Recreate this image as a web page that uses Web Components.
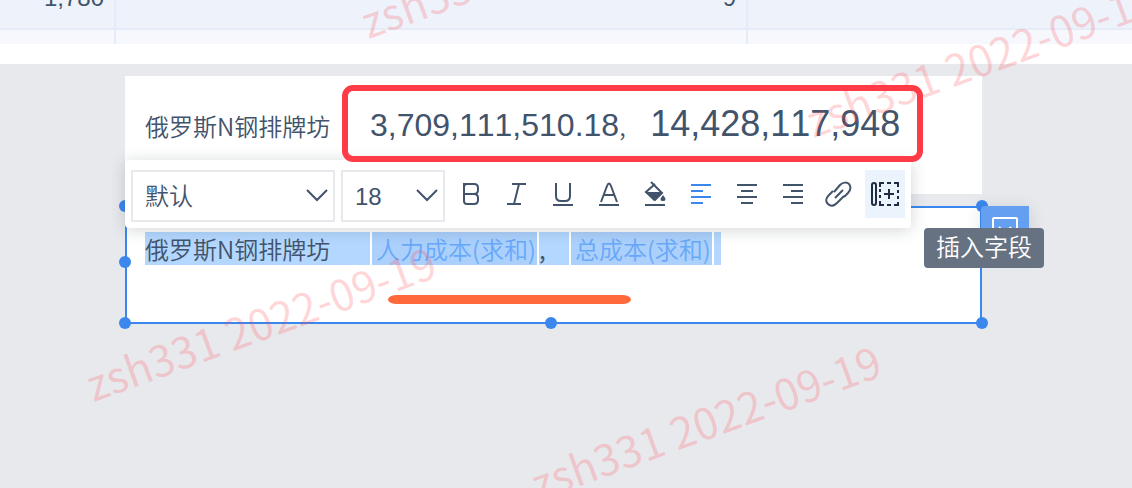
<!DOCTYPE html>
<html lang="zh-CN">
<head>
<meta charset="utf-8">
<title>报表编辑</title>
<style>
html,body{margin:0;min-height:100%;background:#e8e9ed}
body{font-family:"Liberation Sans","Noto Sans CJK SC",sans-serif;color:#42536c;overflow:hidden;height:100vh}
</style>
</head>
<body>
<report-editor></report-editor>
<script>
const define = (name, html, setup) => {
  const tpl = document.createElement('template');
  tpl.innerHTML = html;
  customElements.define(name, class extends HTMLElement {
    connectedCallback() {
      if (this.shadowRoot) return;
      this.attachShadow({mode: 'open'}).append(tpl.content.cloneNode(true));
      if (setup) setup(this, this.shadowRoot);
    }
  });
};

define('data-grid', `
<style>
:host{display:block;height:44px;overflow:hidden;background:#f6f8fd;border-bottom:20px solid #fff}
table{width:100%;margin-top:-32px;border-collapse:separate;border-spacing:0;table-layout:fixed;font-size:24px;line-height:28px;font-kerning:none}
td{height:60px;padding:0 10px 0 0;box-sizing:border-box;text-align:right;vertical-align:middle;border-right:2px solid #e5ecf8;border-bottom:2px solid #e5ecf8}
td:last-child{border-right:0}
tr:first-child td{background:#edf2fb;height:62px}
.a{width:116px}.b{width:632px}
</style>
<table><colgroup><col class="a"><col class="b"><col></colgroup>
<tbody><tr><td>1,780</td><td>9</td><td></td></tr><tr><td></td><td></td><td></td></tr></tbody></table>`);

define('text-card', `
<style>
:host{display:block;position:relative;box-sizing:border-box;height:118px;padding:24px 20px 0;background:#fff;font-size:24px;line-height:48px;white-space:nowrap}
:host([selected]){border:2px solid #3b87ee;padding:24px 18px 0;line-height:33px}
i{display:none;position:absolute;width:12px;height:12px;border-radius:50%;background:#3b87ee}
:host([selected]) i{display:block}
.l{left:-8px}.r{right:-8px}.t{top:-8px}.b{bottom:-7px}
.m{top:calc(50% - 9px)}.c{left:calc(50% - 9px)}
</style>
<slot></slot><i class="l t"></i><i class="l m"></i><i class="l b"></i><i class="c b"></i><i class="r t"></i><i class="r b"></i>`);

define('summary-line', `
<style>
:host{display:flex;align-items:baseline;font-kerning:none}
.t{font-family:"Noto Sans CJK SC",sans-serif;font-weight:350;width:185px}
.n{font-size:32px;margin-left:40px}
.s{font-family:"Noto Sans CJK SC",sans-serif;font-weight:350;width:7px}
.w{font-size:36px;margin-left:24px}
</style>
<span class="t">俄罗斯N钢排牌坊</span><span class="n">3,709,111,510.18</span><span class="s">,</span><span class="w">14,428,117,948</span>`);

define('field-token', `
<style>
:host{display:block;box-sizing:border-box;padding:0 1px 0 4px;background:#abd0fb;color:#68a8f8;border:solid #fff;border-width:0 2px}
</style><slot></slot>`);

define('formula-line', `
<style>
:host{display:flex;width:max-content;background:#b3d7fe;font-family:"Noto Sans CJK SC",sans-serif;font-weight:350}
.t{width:225px}.s{width:30px;font-weight:400}.e{width:7px}
</style>
<span class="t">俄罗斯N钢排牌坊</span><field-token>人力成本(求和)</field-token><span class="s">,</span><field-token>总成本(求和)</field-token><span class="e"></span>`);

define('pick-list', `
<style>
:host{display:block;position:relative}
select{appearance:none;display:block;width:100%;height:52px;margin:0;padding:0 12px;border:2px solid #e8e9ed;border-radius:0;background:#fff;color:inherit;font:inherit;font-weight:350;font-size:24px}
svg{position:absolute;right:6px;top:18px;pointer-events:none}
</style>
<select></select>
<svg width="24" height="16" viewBox="0 0 24 16" fill="none" stroke="#42536c" stroke-width="2"><path d="M2 2l10 10L22 2"/></svg>`,
(host, root) => {
  const s = root.querySelector('select');
  s.setAttribute('aria-label', host.getAttribute('label'));
  s.add(new Option(host.getAttribute('value')));
});

const icons = {
  bold: '<path d="M8 4h10q4 0 4 4v2q0 4-4 4H8zM8 14h10q4 0 4 4v2q0 4-4 4H11q-3 0-3-3V7q0-3 3-3"/>',
  italic: '<path d="M10 4h14M5 24h14M17 4l-5 20"/>',
  underline: '<path d="M8 3v13q0 5 5 5h4q5 0 5-5V3M5 25h20"/>',
  color: '<path d="M7 22l6-16q2-5 4 0l6 16M9 15h12M5 25h20"/>',
  fill: '<path d="M11 2l11 11-7 7-9-8 9-8"/><path fill="#42536c" stroke="none" d="M5 12h18l-9 9zM23 15q-5 6 0 6t0-6z"/><path d="M5 25h20"/>',
  left: '<path d="M5 5h20M5 11h12M5 17h20M5 23h12"/>',
  center: '<path d="M5 5h20M9 11h12M5 17h20M9 23h12"/>',
  right: '<path d="M5 5h20M13 11h12M5 17h20M13 23h12"/>',
  link: '<path d="M10 12l6-7c3-3 7-3 9-1s2 6-1 9l-4 4M11 18l8-8M20 16l-7 7c-3 3-6 4-9 1s-2-6 1-9l4-4"/>',
  field: '<rect x="2" y="3" width="4" height="22" rx="2"/><path d="M10 7V3h4m3 0h4m3 0h4v4m0 3v3m0 3v3m0 3v3h-4m-3 0h-4m-3 0h-4v-4m0-3v-3m0-3v-3M14 14h10M19 9v10"/>'
};
define('tool-button', `
<style>
:host{display:block}
button{display:flex;align-items:center;justify-content:center;width:40px;height:48px;margin:0;padding:0;border:0;background:none;color:#42536c}
:host([on]) button{color:#3b87ee}
:host([hover]) button{background:#ebf3fd;color:#1f2c43}
svg{fill:none;stroke:currentColor;stroke-width:2}
</style>
<button type="button"><svg width="30" height="28" viewBox="0 0 30 28"></svg></button>`,
(host, root) => {
  root.querySelector('svg').innerHTML = icons[host.getAttribute('icon')];
  root.querySelector('button').setAttribute('aria-label', host.getAttribute('label'));
});

define('format-bar', `
<style>
:host{display:flex;align-items:center;box-sizing:border-box;height:68px;padding:4px 6px 0;background:#fff;border-radius:4px;box-shadow:0 2px 16px rgba(31,45,61,.2)}
.font{width:204px;margin-right:6px}.size{width:104px}
.tools{display:flex;gap:6px;margin:-4px 0 0 6px}
</style>
<pick-list class="font" label="字体" value="默认"></pick-list><pick-list class="size" label="字号" value="18"></pick-list>
<div class="tools">
<tool-button icon="bold" label="加粗"></tool-button><tool-button icon="italic" label="斜体"></tool-button>
<tool-button icon="underline" label="下划线"></tool-button><tool-button icon="color" label="文字颜色"></tool-button>
<tool-button icon="fill" label="背景颜色"></tool-button><tool-button icon="left" label="左对齐" on></tool-button>
<tool-button icon="center" label="居中"></tool-button><tool-button icon="right" label="右对齐"></tool-button>
<tool-button icon="link" label="链接"></tool-button><tool-button icon="field" label="插入字段" hover></tool-button>
</div>`);

define('card-menu', `
<style>
:host{display:block}
button{display:block;width:48px;height:48px;margin:0;padding:10px;border:0;border-radius:4px 0 0 0;background:#649ff2;box-shadow:0 2px 16px rgba(31,45,61,.15)}
</style>
<button type="button" aria-label="卡片菜单"><svg width="28" height="28" viewBox="0 0 28 28" fill="none" stroke="#fff" stroke-width="2"><rect x="2" y="2" width="24" height="24" rx="1"/><path d="M8 11l6 6 6-6"/></svg></button>`);

define('tool-tip', `
<style>
:host{display:block;padding:0 12px;border-radius:4px;background:#667182;color:#fff;font-size:24px;line-height:40px;white-space:nowrap;font-weight:350}
</style><slot></slot>`);

define('water-mark', `
<style>
:host{position:absolute;display:block;font:43px/48px "Noto Sans CJK SC",sans-serif;color:rgba(255,70,80,.22);white-space:nowrap;transform:rotate(-20deg);transform-origin:0 100%;pointer-events:none}
</style>zsh331 2022-09-19`);

define('report-editor', `
<style>
:host{display:block;position:relative;height:100vh;overflow:hidden}
main{display:grid;gap:12px;padding:12px 150px 0 125px}
.wrap{position:relative}
format-bar{position:absolute;left:0;top:-46px;z-index:3}
card-menu{position:absolute;left:calc(100% - 1px);top:0;z-index:3}
tool-tip{position:absolute;right:-62px;top:22px;z-index:4}
.frame{position:absolute;left:217px;top:9px;width:581px;height:77px;box-sizing:border-box;border:6px solid #ff3b48;border-radius:11px;z-index:4}
.stroke{position:absolute;left:263px;top:89px;width:243px;height:9px;border-radius:10px/5px;background:#ff693c}
.w1{left:370px;top:-4px}.w2{left:95px;top:359px}.w3{left:815px;top:95px}.w4{left:540px;top:458px}
</style>
<data-grid></data-grid>
<main>
<div class="wrap"><text-card><summary-line></summary-line></text-card><div class="frame"></div></div>
<div class="wrap"><text-card selected><formula-line></formula-line></text-card><div class="stroke"></div>
<format-bar></format-bar><card-menu></card-menu><tool-tip role="tooltip">插入字段</tool-tip></div>
</main>
<water-mark class="w1"></water-mark><water-mark class="w2"></water-mark><water-mark class="w3"></water-mark><water-mark class="w4"></water-mark>`);
</script>
</body>
</html>
